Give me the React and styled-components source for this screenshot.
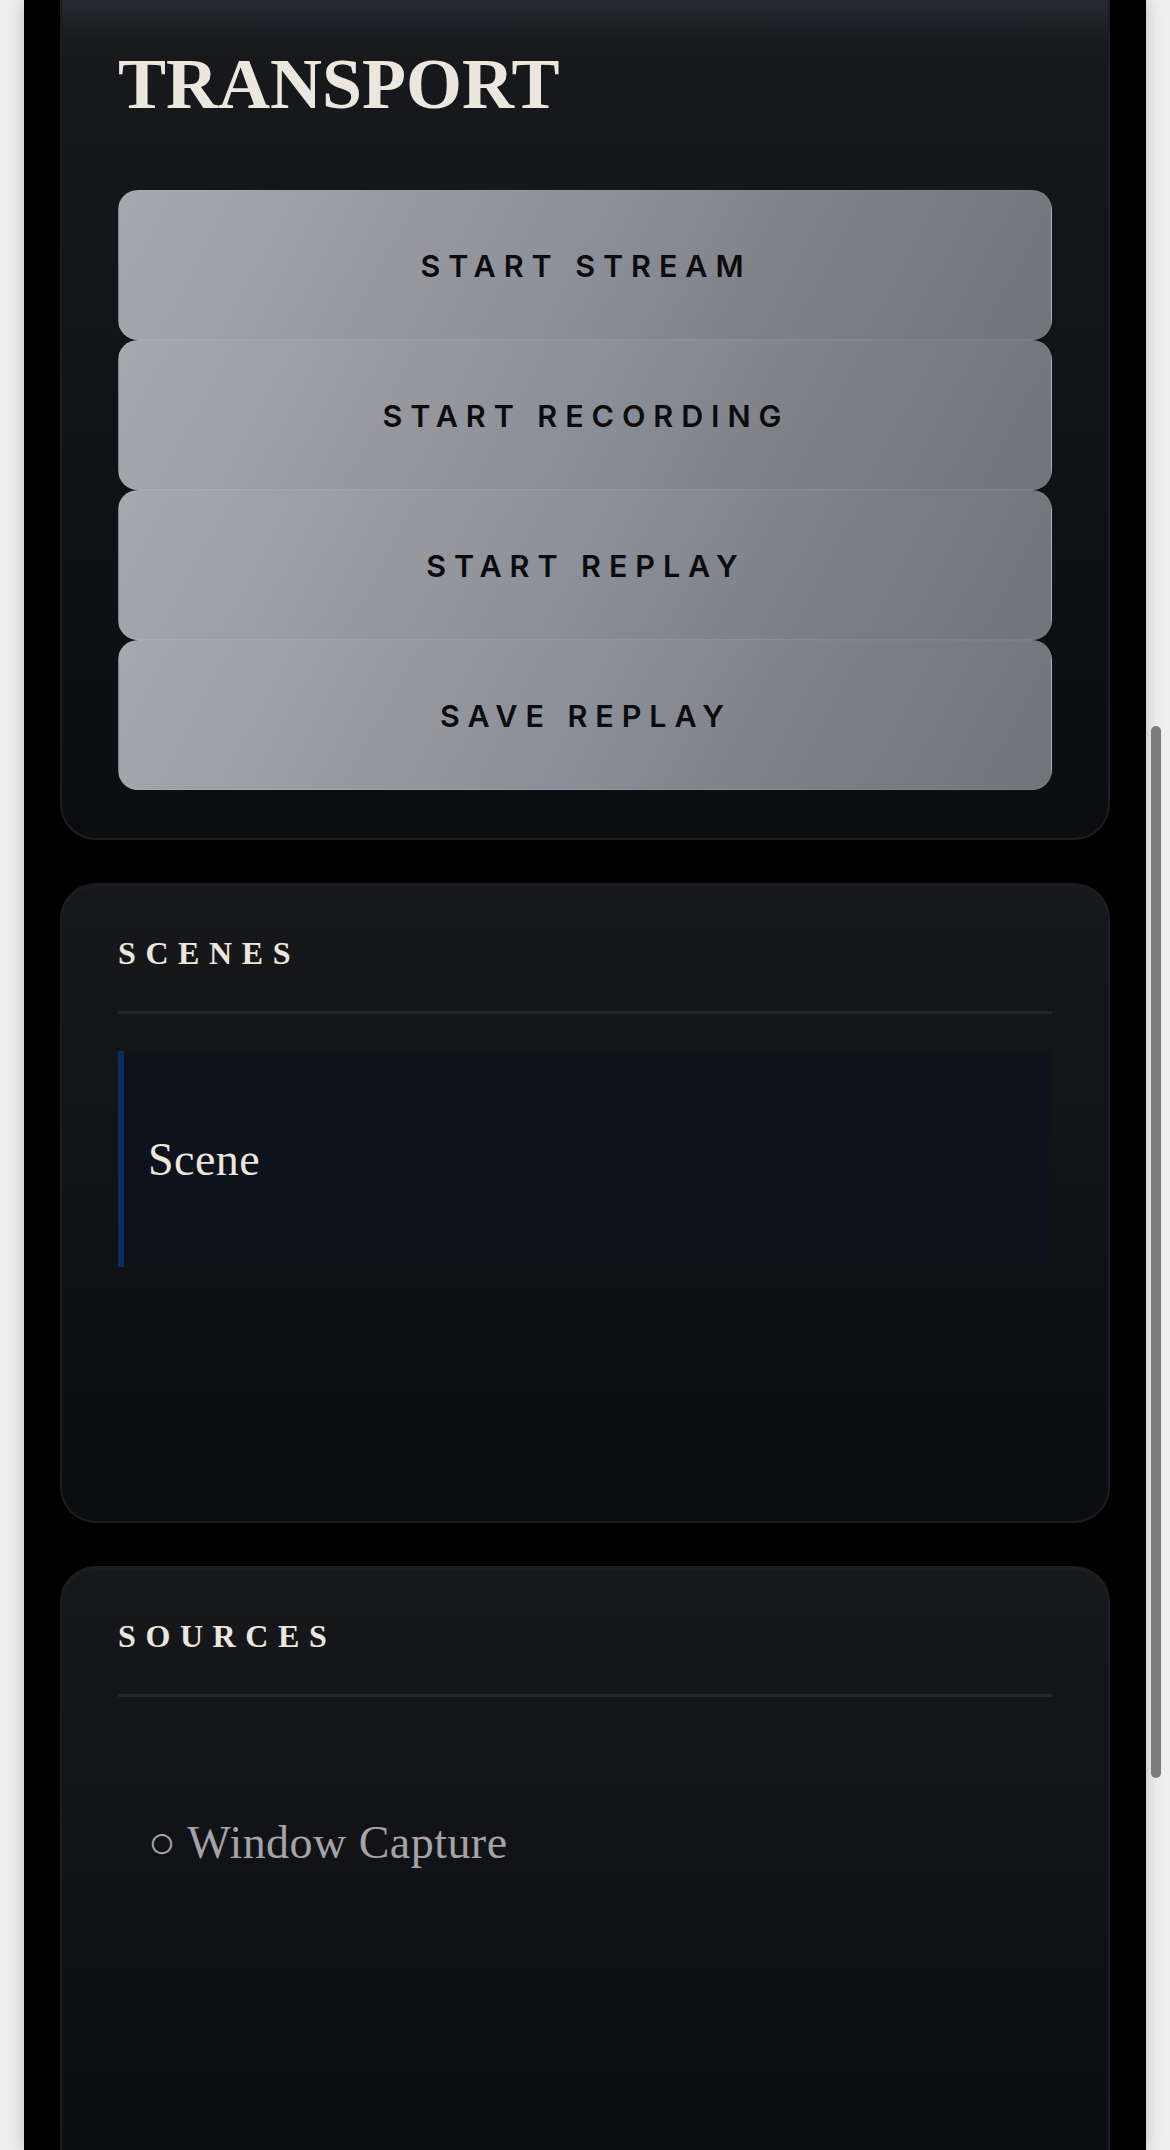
import React from "react";
import styled, { createGlobalStyle } from "styled-components";

const GlobalStyle = createGlobalStyle`
  html, body {
    margin: 0;
    padding: 0;
    background: #efefef;
  }
  body {
    font-family: "Liberation Serif", "Times New Roman", serif;
    overflow: hidden;
  }
`;

const Shell = styled.main`
  margin: 0 24px;
  height: 2150px;
  overflow: hidden;
  background: #000;
  box-shadow: 0 0 16px rgba(0, 0, 0, 0.22);
  padding: 0 36px;
  display: flex;
  flex-direction: column;
  gap: 43px;
  box-sizing: border-box;
`;

const Panel = styled.section`
  flex-shrink: 0;
  border-radius: 36px;
  border: 2px solid #1c1d22;
  background: linear-gradient(180deg, #17181c 0%, #111216 50%, #0c0d10 100%);
  box-shadow: inset 0 2px 0 rgba(255, 255, 255, 0.025), 0 12px 30px rgba(0, 0, 0, 0.6);
  padding: 52px 56px 56px;
`;

/* the transport panel is scrolled partly out of view */
const TransportPanel = styled(Panel)`
  margin-top: -40px;
  padding-top: 86px;
  padding-bottom: 48px;
  background: linear-gradient(
    180deg,
    #2e2f34 0px,
    #25262b 50px,
    #18191d 80px,
    #121317 420px,
    #0c0d10 100%
  );
`;

const Title = styled.h1`
  margin: 0 0 70px;
  font-family: "Liberation Serif", "Times New Roman", serif;
  font-weight: 700;
  font-size: 72px;
  line-height: 1;
  color: #ebe7de;
`;

const ButtonStack = styled.div`
  display: flex;
  flex-direction: column;
`;

const TransportButton = styled.button`
  height: 150px;
  border: 1px solid rgba(255, 255, 255, 0.06);
  border-radius: 20px;
  background: linear-gradient(
    118deg,
    #a8a9ae 0%,
    #97989d 32%,
    #8a8f99 50%,
    #7f8085 72%,
    #737479 100%
  );
  display: flex;
  align-items: center;
  justify-content: center;
  font-family: Inter, "Liberation Sans", sans-serif;
  font-weight: 600;
  font-size: 30.5px;
  letter-spacing: 0.26em;
  padding-left: 0.26em;
  color: #0c0c0e;
  cursor: pointer;
`;

const PanelHeader = styled.header`
  padding-bottom: 42px;
  border-bottom: 3px solid #24252a;
  margin-bottom: 37px;
`;

const Heading = styled.h2`
  margin: 0;
  font-family: "Liberation Serif", "Times New Roman", serif;
  font-weight: 700;
  font-size: 32px;
  line-height: 1;
  letter-spacing: 0.3em;
  color: #ebe7de;
`;

const List = styled.ul`
  list-style: none;
  margin: 0;
  padding: 0;
  min-height: 414px;
`;

const Item = styled.li`
  height: 216px;
  box-sizing: border-box;
  display: flex;
  align-items: center;
  padding-left: 24px;
  border-left: 6px solid ${(p) => (p.$active ? "#0f2a5e" : "transparent")};
  background: ${(p) => (p.$active ? "#0e121a" : "transparent")};
  font-size: 46px;
  letter-spacing: 0.01em;
  color: ${(p) => (p.$active ? "#ebe7de" : "#a3a3a8")};
`;

const ScrollThumb = styled.div`
  position: fixed;
  top: 726px;
  right: 9px;
  width: 10px;
  height: 1052px;
  border-radius: 5px;
  background: #7b7b7b;
`;

const transport = ["START STREAM", "START RECORDING", "START REPLAY", "SAVE REPLAY"];

export default function App() {
  return (
    <>
      <GlobalStyle />
      <Shell>
        <TransportPanel>
          <Title>TRANSPORT</Title>
          <ButtonStack>
            {transport.map((label) => (
              <TransportButton key={label}>{label}</TransportButton>
            ))}
          </ButtonStack>
        </TransportPanel>

        <Panel>
          <PanelHeader>
            <Heading>SCENES</Heading>
          </PanelHeader>
          <List>
            <Item $active>Scene</Item>
          </List>
        </Panel>

        <Panel>
          <PanelHeader>
            <Heading>SOURCES</Heading>
          </PanelHeader>
          <List>
            <Item>○ Window Capture</Item>
          </List>
        </Panel>
      </Shell>
      <ScrollThumb />
    </>
  );
}
